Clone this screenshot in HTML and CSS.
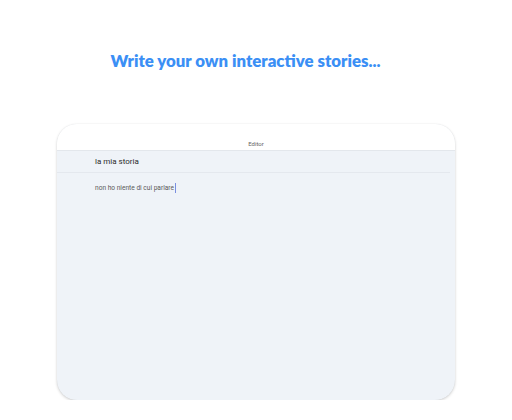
FILE: index.html
```html
<!DOCTYPE html>
<html lang="it">
<head>
  <meta charset="UTF-8">
  <title>Editor</title>
  <link rel="stylesheet" href="styles.css">
</head>
<body>
  <h1 class="headline">Write your own interactive stories...</h1>
  <div class="device">
    <div class="device-bar">Editor</div>
    <div class="device-body">
      <div class="story-title">la mia storia</div>
      <div class="story-text">non ho niente di cui parlare<span class="caret"></span></div>
    </div>
  </div>
</body>
</html>
```

FILE: styles.css
```css
body {
  margin: 0;
  background: #ffffff;
  font-family: Roboto, "Liberation Sans", sans-serif;
}
.headline {
  margin: 0;
  padding-top: 50px;
  padding-right: 21px;
  height: 75px;
  box-sizing: border-box;
  text-align: center;
  font-family: Lato, "Noto Sans", sans-serif;
  font-weight: 800;
  font-size: 16.8px;
  color: #3b8ff5;
}
.device {
  width: 398px;
  height: 276px;
  margin: 49px 0 0 57px;
  border-radius: 20px;
  overflow: hidden;
  background: #eff3f8;
  box-shadow: 0 1px 3px rgba(0,0,0,0.18), 0 0 1px rgba(0,0,0,0.1);
  display: flex;
  flex-direction: column;
}
.device-bar {
  height: 27px;
  background: #ffffff;
  border-bottom: 1px solid #e3e7ec;
  display: flex;
  align-items: flex-end;
  justify-content: center;
  padding-bottom: 3px;
  box-sizing: border-box;
  font-size: 6px;
  color: #666;
}
.device-body {
  flex: 1;
}
.story-title {
  height: 21px;
  margin-right: 5px;
  padding-left: 38px;
  border-bottom: 1px solid #e4e8ee;
  display: flex;
  align-items: center;
  font-size: 8px;
  color: #2b2b2b;
}
.story-text {
  padding: 10px 0 0 38px;
  font-size: 6.6px;
  color: #5a5a5a;
  display: flex;
  align-items: center;
}
.caret {
  display: inline-block;
  width: 1px;
  height: 10px;
  margin-left: 1px;
  background: #7a8fe0;
}
```
